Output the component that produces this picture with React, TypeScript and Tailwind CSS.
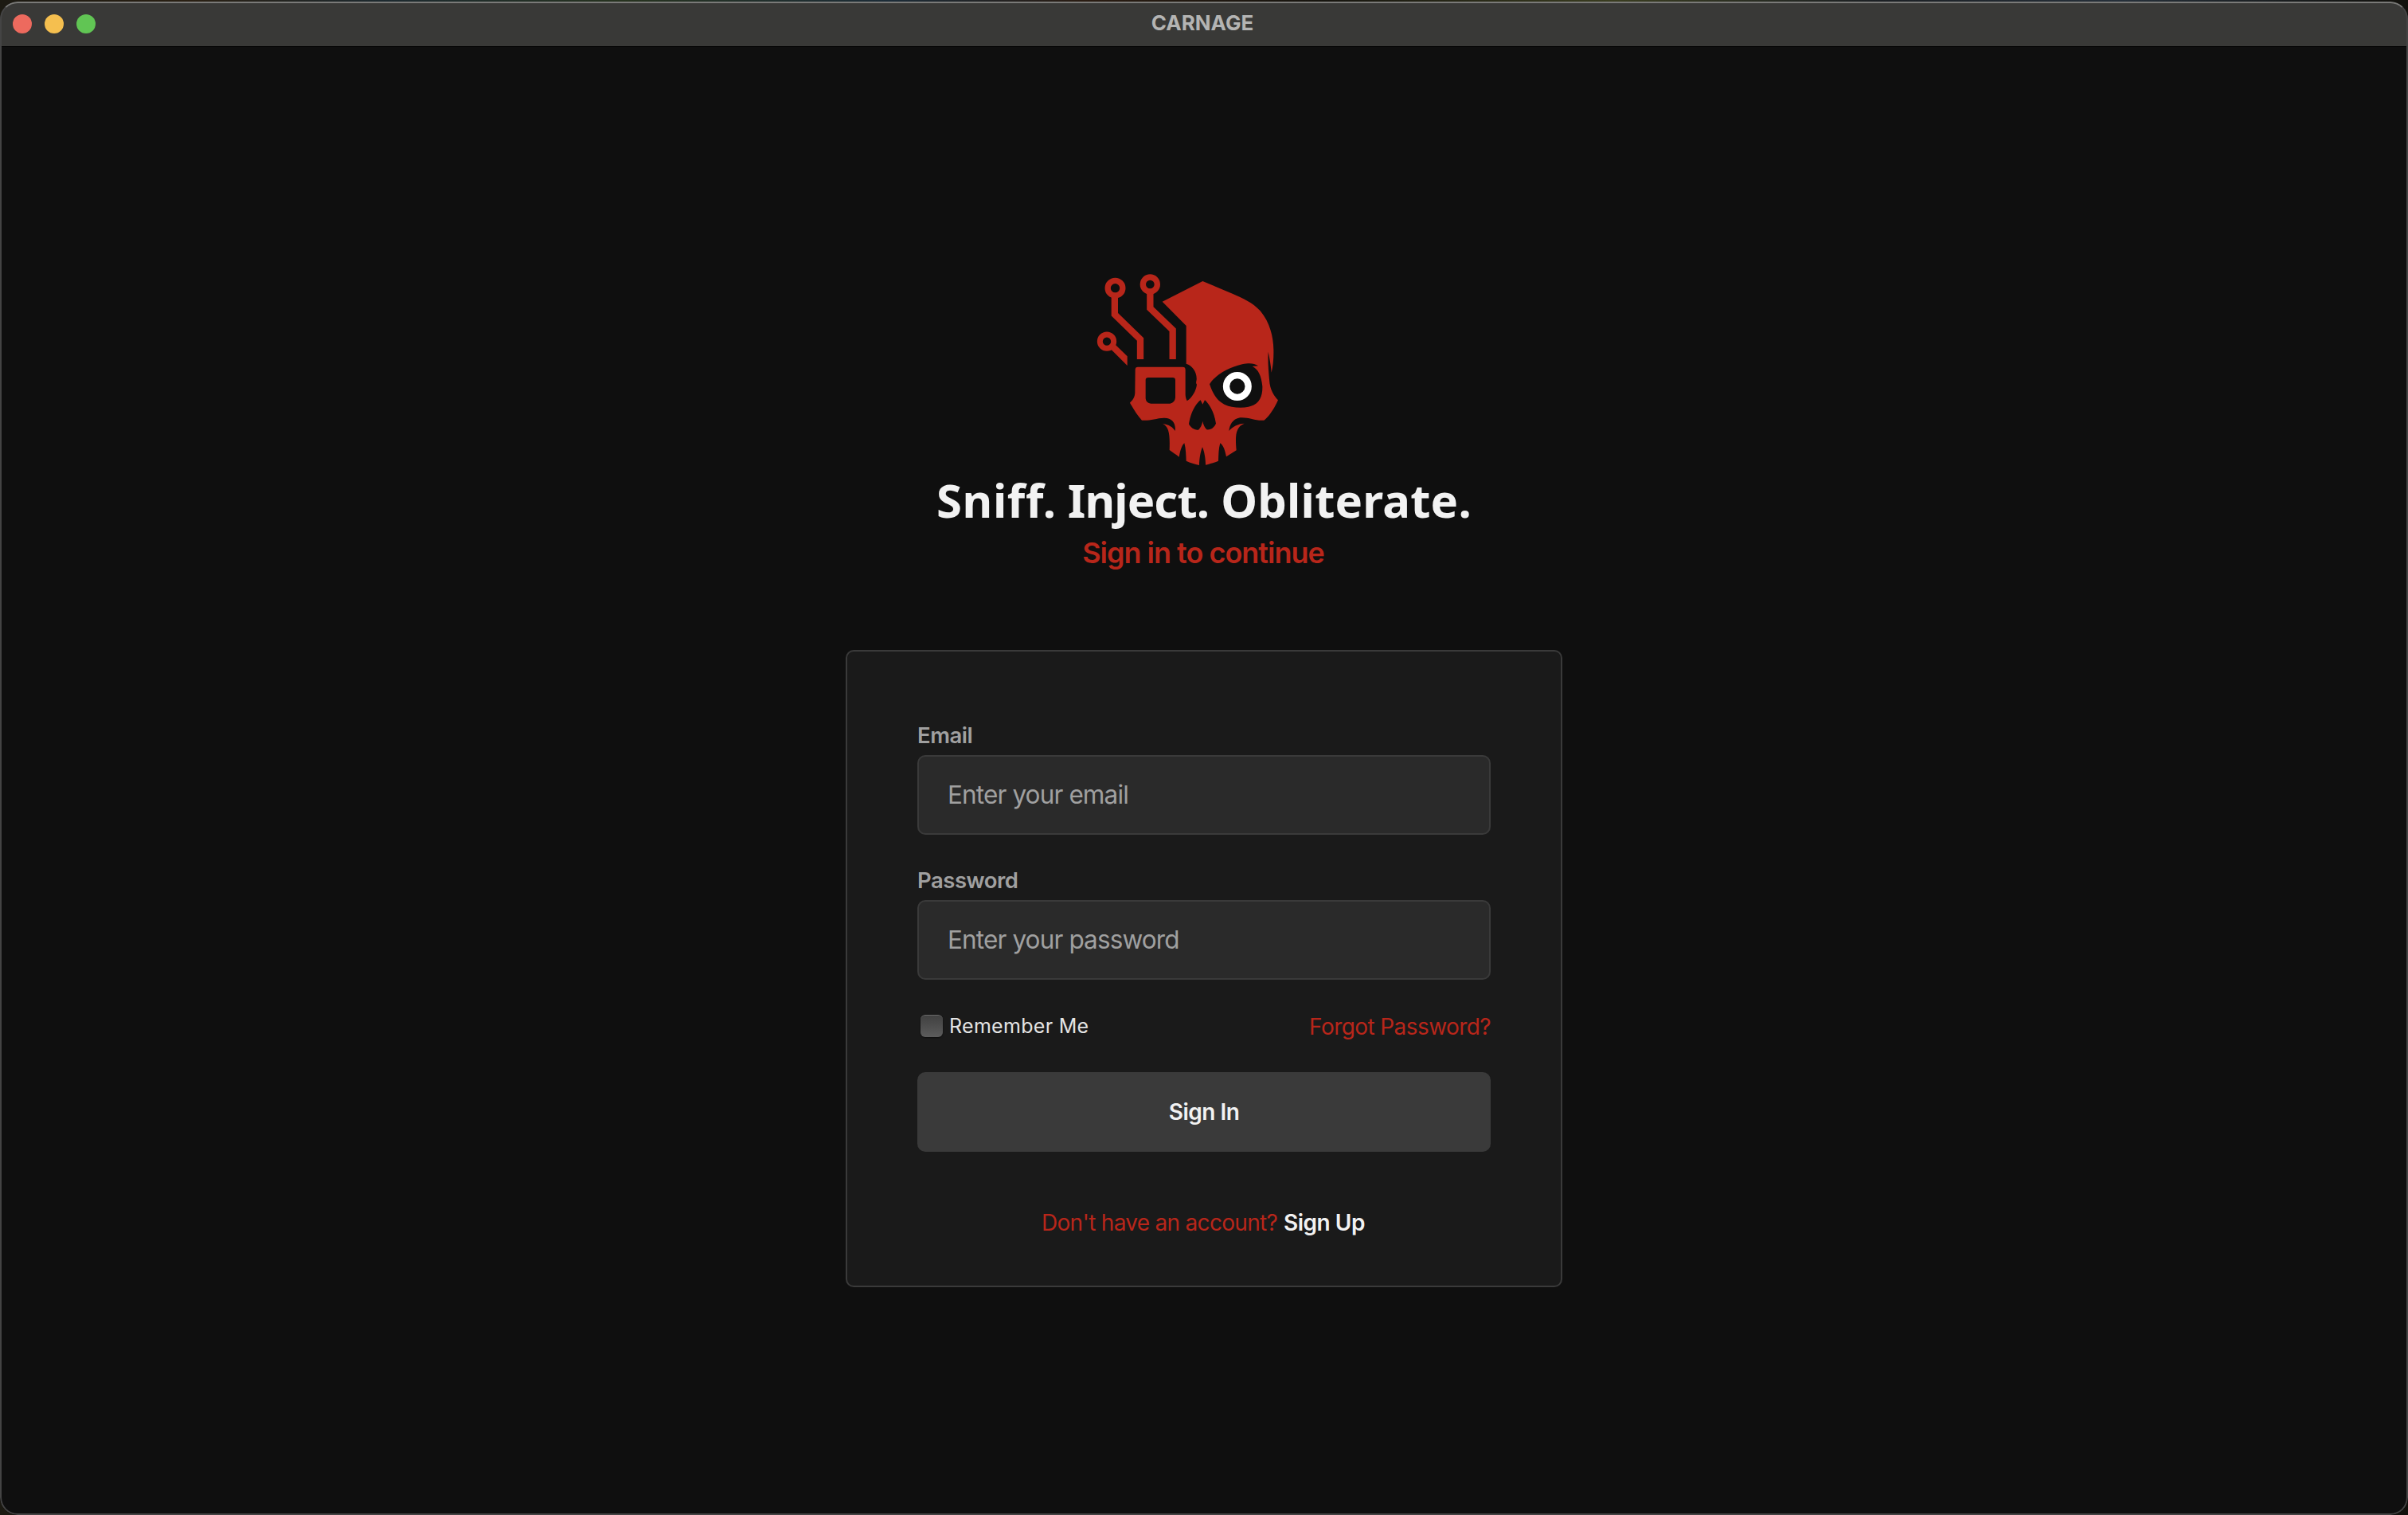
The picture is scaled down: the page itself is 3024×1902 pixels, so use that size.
import React from "react";

function SkullLogo() {
  return (
    <svg className="h-[268px] w-[300px] shrink-0" viewBox="6 0 900 804" fill="none" aria-label="Carnage">
      <g stroke="#b8261a">
        <circle cx="121.5" cy="95" r="28" strokeWidth="22" />
        <circle cx="253" cy="81" r="27" strokeWidth="22" />
        <circle cx="90" cy="296" r="26" strokeWidth="21" />
        <path d="M119.5 128 V194 L216 288 V363" strokeWidth="25" />
        <path d="M253 113 V171 L338 253 V363" strokeWidth="25" />
      </g>
      <path fill="#b8261a" d="M106 326 L123 309 L167 352 V387 Z" />
      <path
        fill="#b8261a"
        fillRule="evenodd"
        d="M451 69 L299 146 L389 237 V380 C412 386 430 412 428 440 C427 448 424 452 429 458 C427 480 410 510 392 520 C386 508 386 500 386 490 V402 Q386 392 376 392 H207 Q197 392 197 402 L196 490 C195 505 190 515 177 527 C190 550 205 575 222 593 C250 596 275 585 305 584 C336 583 351 605 347 633 C338 618 325 610 300 605 C325 618 328 645 326 705 C338 715 352 722 362 731 C366 712 370 690 382 679 C388 700 388 725 389 746 C405 753 420 758 438 762 C438 740 443 710 450 694 C458 712 462 740 462 761 C480 757 495 752 510 746 C511 720 511 700 517 679 C530 688 536 710 540 730 L578 706 C573 650 575 618 608 605 C585 606 562 617 550 633 C553 612 562 588 592 583 C625 581 650 596 682 593 C700 580 720 550 735 517 C722 503 704 480 702 440 C699 405 696 370 698 335 C703 360 708 385 710 413 C716 390 719 360 718 325 C717 280 705 225 668 181 C640 150 600 132 565 117 Z
           M246 432 H338 Q348 432 348 442 V508 Q346 527 328 530 H256 Q238 528 236 511 V442 Q236 432 246 432 Z
           M477 457 C496 425 545 395 600 382 C630 376 645 379 660 388 L638 390 C660 400 672 425 676 465 C677 512 660 545 593 545 C530 545 498 520 477 457 Z
           M443 517 L451 533 L459 517 C480 535 496 570 501 605 C495 620 482 630 466 628 C458 620 452 605 451 596 C449 608 443 622 435 629 C420 631 405 620 399 607 C405 570 420 535 443 517 Z"
      />
      <circle cx="581.5" cy="465" r="41.5" stroke="#ffffff" strokeWidth="25" />
    </svg>
  );
}

function Field({ label, type, placeholder }: { label: string; type: string; placeholder: string }) {
  return (
    <label className="flex flex-col gap-[5px]">
      <span className="text-[27.5px] leading-10 font-semibold tracking-[-0.5px] text-[#a0a0a0]">{label}</span>
      <input
        type={type}
        placeholder={placeholder}
        className="h-[100px] w-full rounded-[10px] border-2 border-[#3a3a3a] bg-[#2a2a2a] px-[36px] pb-[2px] text-[31.5px] tracking-[-0.87px] text-white outline-none placeholder:text-[#a0a0a0]"
      />
    </label>
  );
}

export default function App() {
  return (
    <div className="h-[1902px] w-[3024px] overflow-hidden bg-[linear-gradient(90deg,#1c1a12,#2a2013_8%,#1d2a30_16%,#27331f_26%,#1c2c38_37%,#2a1c12_45%,#17150f_55%,#3a3d20_67%,#1c2024_78%,#26303a_88%,#12110c)] pt-[2px] font-[Inter,sans-serif]">
      <div className="relative flex h-[1900px] flex-col overflow-hidden rounded-[22px] bg-[#0f0f0f]">
        <header className="flex h-[57px] shrink-0 items-center border-b border-black bg-[#393937] px-4">
          <div className="flex flex-1 gap-4">
            <span className="size-6 rounded-full bg-[#ed6a5e]" />
            <span className="size-6 rounded-full bg-[#f5bf4f]" />
            <span className="size-6 rounded-full bg-[#61c554]" />
          </div>
          <h1 className="pr-1 pb-[2px] text-[26px] leading-8 font-bold text-[#b4b4b3]">CARNAGE</h1>
          <div className="flex-1" />
        </header>

        <main className="flex flex-1 flex-col items-center pt-[271px]">
          <SkullLogo />
          <h2 className="font-['Noto_Sans',sans-serif] text-[58px] leading-[60px] font-bold whitespace-nowrap text-[#f2f2f2]">
            <span className="tracking-[0.6px]">Sniff.</span>{" "}
            <span className="-ml-px tracking-[-0.9px]">Inject.</span>{" "}
            <span className="tracking-[0.2px]">Obliterate.</span>
          </h2>
          <p className="mt-3 pr-[2px] text-[36px] leading-[49px] font-semibold tracking-[-1px] text-[#b8261a]">Sign in to continue</p>

          <form className="mt-[97px] flex h-[800px] w-[900px] flex-col rounded-[10px] border-2 border-[#3a3a3a] bg-[#1a1a1a] px-[88px] pt-[85px]">
            <div className="flex flex-col gap-[37px]">
              <Field label="Email" type="email" placeholder="Enter your email" />
              <Field label="Password" type="password" placeholder="Enter your password" />
            </div>
            <div className="mt-[39px] flex h-10 items-start justify-between">
              <label className="flex items-start gap-[7px] pl-1">
                <input
                  type="checkbox"
                  className="mt-[5px] size-7 appearance-none rounded-[6px] border-t border-[#6a6a6a] bg-linear-to-b from-[#414141] to-[#5c5c5c] shadow-[0_1px_2px_rgba(0,0,0,0.5)]"
                />
                <span className="pl-px text-[25px] leading-[38px] tracking-[0.3px] text-[#e4e4e4]">Remember Me</span>
              </label>
              <a className="text-[28px] leading-[41px] tracking-[-0.58px] text-[#b8261a]">Forgot Password?</a>
            </div>
            <button
              type="button"
              className="mt-[37px] h-[100px] rounded-[10px] bg-[#3a3a3a] pb-px text-[28px] font-semibold tracking-[-0.5px] text-[#f2f2f2]"
            >
              Sign In
            </button>
            <p className="mt-[69px] pr-[2px] text-center text-[28px] leading-[41px] text-[#b8261a]">
              <span className="tracking-[-0.7px]">Don't have an account?</span>{" "}
              <a className="font-semibold tracking-[-0.47px] text-[#f2f2f2]">Sign Up</a>
            </p>
          </form>
        </main>
        <div className="pointer-events-none absolute inset-0 rounded-[22px] border-2 border-[#444444] border-t-[#7a7a78]" />
      </div>
    </div>
  );
}
